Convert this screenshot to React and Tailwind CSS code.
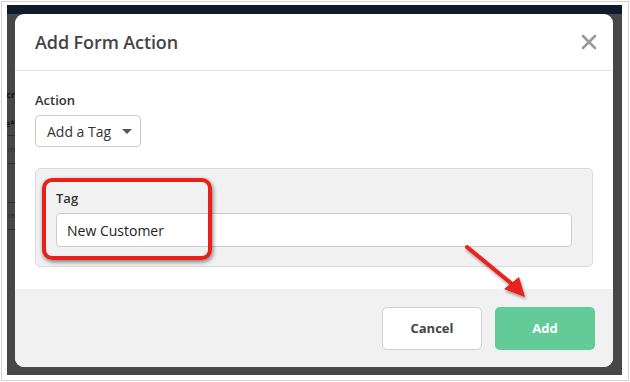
import { X } from 'lucide-react';

// Screenshot of a modal ("Add Form Action") with red annotation overlays.
const font = { fontFamily: '"Open Sans", "Liberation Sans", sans-serif' };

function PageStrip() {
  // sliver of the dimmed page visible left of the modal
  return (
    <div className="w-[8px] shrink-0 overflow-hidden flex flex-col items-end bg-[#474747]">
      <div className="h-[72px]" />
      <div className="h-[18px] text-[9px] leading-[18px] font-bold text-[#151515] whitespace-nowrap">cr</div>
      <div className="h-[12px]" />
      <div className="h-[16px] text-[9px] leading-[16px] font-bold text-[#151515] whitespace-nowrap">e*</div>
      <div className="h-px w-full bg-[#2e2e2e] mt-[3px]" />
      <div className="h-[27px] text-[7px] leading-[27px] text-[#2a2a2a] whitespace-nowrap">rn</div>
      <div className="h-px w-full bg-[#2e2e2e]" />
      <div className="h-[38px]" />
      <div className="h-px w-full bg-[#2e2e2e]" />
      <div className="h-[26px] text-[7px] leading-[26px] text-[#2a2a2a] whitespace-nowrap">re</div>
      <div className="h-px w-full bg-[#2e2e2e]" />
    </div>
  );
}

export default function App() {
  return (
    <div className="relative w-[630px] h-[382px] bg-white p-px" style={font}>
      <div className="h-full border border-[#d2d2d2] pt-[3px] pl-[5px] pr-[6px] pb-[5px]">
        <div className="h-full flex flex-col bg-[#474747]">
          <div className="h-[9px] bg-[#0f1a2b] shrink-0" />
          <div className="flex-1 flex">
            <PageStrip />
            <div className="w-[598px] h-[353px] bg-white rounded-[9px] overflow-hidden flex flex-col">
              <div className="h-[57px] shrink-0 border-b border-[#e3e3e3] flex items-center justify-between pl-[20px] pr-[12px]">
                <span className="text-[18px] font-semibold text-[#444] tracking-[-0.1px]">Add Form Action</span>
                <X size={24} strokeWidth={2.6} className="text-[#9a9a9a]" />
              </div>
              <div className="flex-1 px-[20px] pt-[20px]">
                <div className="text-[13px] font-semibold text-[#333] leading-[18px]">Action</div>
                <div className="mt-[6px] w-[106px] h-[32px] rounded-[4px] border border-[#cccccc] flex items-center justify-between pl-[11px] pr-[8px]">
                  <span className="text-[14px] text-[#333]">Add a Tag</span>
                  <span className="w-0 h-0 border-l-[5px] border-r-[5px] border-t-[5px] border-l-transparent border-r-transparent border-t-[#555]" />
                </div>
                <div className="mt-[21px] h-[99px] rounded-[5px] border border-[#dadada] bg-[#f1f1f1] pt-[20px] px-[20px]">
                  <div className="text-[13px] font-semibold text-[#333] leading-[18px]">Tag</div>
                  <div className="mt-[6px] h-[34px] bg-white rounded-[4px] border border-[#cccccc] flex items-center pl-[10px]">
                    <span className="text-[14px] text-[#222]">New Customer</span>
                  </div>
                </div>
              </div>
              <div className="h-[78px] shrink-0 bg-[#f1f1f1] flex items-start justify-end gap-[13px] pt-[18px] pr-[18px]">
                <button className="w-[100px] h-[43px] bg-white rounded-[5px] border border-[#cfcfcf] text-[13px] font-bold text-[#444]">
                  Cancel
                </button>
                <button className="w-[100px] h-[43px] bg-[#62cb98] rounded-[5px] text-[13px] font-bold text-white">
                  Add
                </button>
              </div>
            </div>
            <div className="flex-1" />
          </div>
        </div>
      </div>

      {/* annotation overlays */}
      <div className="absolute left-[42px] top-[178px] w-[170px] h-[82px] rounded-[10px] border-[4px] border-[#e8201a] shadow-[1px_2px_4px_rgba(0,0,0,0.5)]" />
      <svg className="absolute left-0 top-0" width="630" height="382" viewBox="0 0 630 382">
        <defs>
          <filter id="sh" x="-20%" y="-20%" width="140%" height="140%">
            <feDropShadow dx="1" dy="2" stdDeviation="1.5" floodColor="#000" floodOpacity="0.4" />
          </filter>
        </defs>
        <g filter="url(#sh)">
          <line x1="467" y1="247" x2="512" y2="284" stroke="#e8201a" strokeWidth="4" strokeLinecap="round" />
          <polygon points="525,297 504,289 519,277" fill="#e8201a" />
        </g>
      </svg>
    </div>
  );
}
